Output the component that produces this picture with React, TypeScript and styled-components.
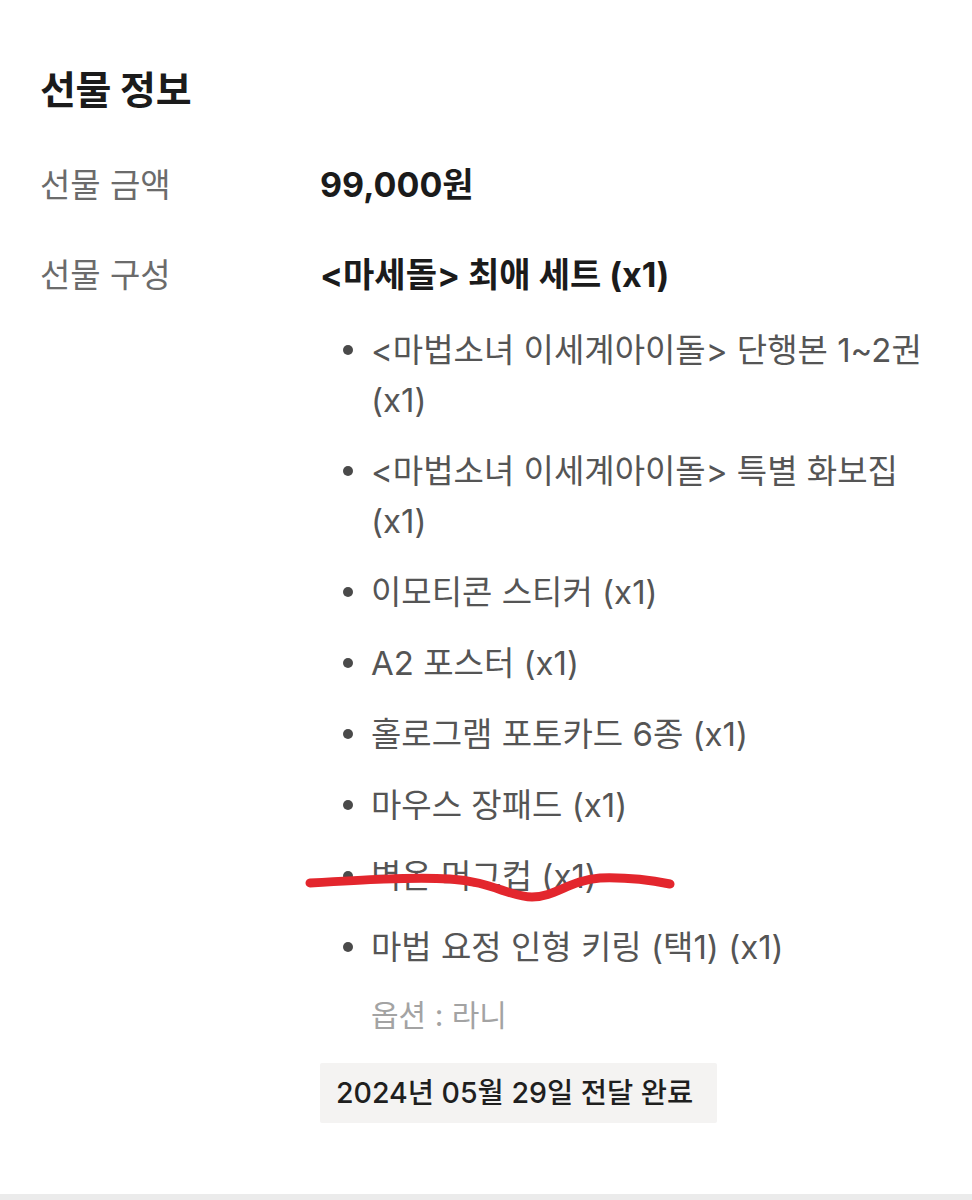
import React from 'react';
import styled, { createGlobalStyle } from 'styled-components';

const GlobalStyle = createGlobalStyle`
	html, body {
		margin: 0;
		padding: 0;
		background: #ffffff;
	}
	body {
		font-family: 'Inter', 'Noto Sans CJK KR', sans-serif;
		-webkit-font-smoothing: antialiased;
	}
`;

const Page = styled.div`
	min-height: 1200px;
	display: flex;
	flex-direction: column;
	background: #ffffff;
`;

const Section = styled.section`
	flex: 1;
	padding: 67px 32px 71px 40px;
`;

const Title = styled.h2`
	margin: 0 0 47px;
	font-size: 39px;
	line-height: 46px;
	font-weight: 700;
	color: #1b1b1b;
	letter-spacing: -0.3px;
`;

const Row = styled.div`
	display: grid;
	grid-template-columns: 280px 1fr;
	margin-bottom: 40px;
	&:last-child {
		margin-bottom: 0;
	}
`;

const Label = styled.div`
	font-size: 33px;
	line-height: 50px;
	color: #6b6b6b;
`;

const Value = styled.div`
	font-size: 34px;
	line-height: 50px;
	font-weight: 700;
	color: #1b1b1b;
`;

const Items = styled.ul`
	list-style: none;
	margin: 25px 0 0;
	padding: 0;
	display: flex;
	flex-direction: column;
	gap: 21px;
`;

const Item = styled.li`
	position: relative;
	padding-left: 51px;
	font-size: 33px;
	line-height: 50px;
	color: #555555;
	&::before {
		content: '';
		position: absolute;
		left: 23px;
		top: 20px;
		width: 10px;
		height: 10px;
		border-radius: 50%;
		background: #4a4a4a;
	}
`;

const Option = styled.div`
	margin: 18px 0 0 51px;
	font-size: 30px;
	line-height: 50px;
	color: #a3a3a3;
`;

const DoneBadge = styled.div`
	display: inline-block;
	margin-top: 23px;
	padding: 0 24px 0 16px;
	height: 60px;
	line-height: 60px;
	background: #f4f3f2;
	font-size: 28.5px;
	font-weight: 500;
	color: #1f1f1f;
	border-radius: 2px;
`;

// hand-drawn red stroke over a crossed-out item
const Scribble = styled.svg`
	position: absolute;
	left: -20px;
	top: 15px;
	width: 380px;
	height: 45px;
	overflow: visible;
	pointer-events: none;
`;

const BottomBand = styled.div`
	height: 8px;
	background: #ebebeb;
`;

const items = [
	'<마법소녀 이세계아이돌> 단행본 1~2권 (x1)',
	'<마법소녀 이세계아이돌> 특별 화보집 (x1)',
	'이모티콘 스티커 (x1)',
	'A2 포스터 (x1)',
	'홀로그램 포토카드 6종 (x1)',
	'마우스 장패드 (x1)',
	'벽온 머그컵 (x1)',
	'마법 요정 인형 키링 (택1) (x1)',
];

function App() {
	return (
		<Page>
			<GlobalStyle />
			<Section>
				<Title>선물 정보</Title>
				<Row>
					<Label>선물 금액</Label>
					<Value>99,000원</Value>
				</Row>
				<Row>
					<Label>선물 구성</Label>
					<div>
						<Value>&lt;마세돌&gt; 최애 세트 (x1)</Value>
						<Items>
							{items.map((item, i) => (
								<Item key={item}>
									{item}
									{i === 6 && (
										<Scribble viewBox="0 0 380 45">
											<path
												d="M10 17 C 60 14, 110 11, 150 13 C 190 15, 210 31, 232 31 C 255 31, 270 14, 300 12 C 330 11, 355 15, 370 18"
												fill="none"
												stroke="#e3262d"
												strokeWidth="9"
												strokeLinecap="round"
											/>
										</Scribble>
									)}
								</Item>
							))}
						</Items>
						<Option>옵션 : 라니</Option>
						<DoneBadge>2024년 05월 29일 전달 완료</DoneBadge>
					</div>
				</Row>
			</Section>
			<BottomBand />
		</Page>
	);
}

export default App;
